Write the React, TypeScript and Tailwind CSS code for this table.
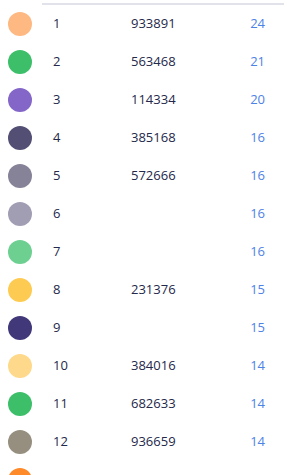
import React from 'react';

type Row = { rank: number | null; color: string; id: string; count: number | null };

const rows: Row[] = [
  { rank: 1, color: '#FEB882', id: '933891', count: 24 },
  { rank: 2, color: '#3DBF6A', id: '563468', count: 21 },
  { rank: 3, color: '#8466C9', id: '114334', count: 20 },
  { rank: 4, color: '#534F74', id: '385168', count: 16 },
  { rank: 5, color: '#868399', id: '572666', count: 16 },
  { rank: 6, color: '#A19EB3', id: '', count: 16 },
  { rank: 7, color: '#6DD091', id: '', count: 16 },
  { rank: 8, color: '#FECB52', id: '231376', count: 15 },
  { rank: 9, color: '#41387A', id: '', count: 15 },
  { rank: 10, color: '#FED98B', id: '384016', count: 14 },
  { rank: 11, color: '#3DBF6A', id: '682633', count: 14 },
  { rank: 12, color: '#968F7F', id: '936659', count: 14 },
  // last row is only peeking in at the bottom edge
  { rank: null, color: '#FE8A2A', id: '', count: null },
];

export default function App() {
  return (
    <div className="w-[287px] h-[475px] overflow-hidden bg-white" style={{ fontFamily: '"Open Sans", "Noto Sans", sans-serif' }}>
      <div className="ml-[42px] mr-[3px] mt-[3px] h-[2px] bg-[#e2e2ea]" />
      {rows.map((row, i) => (
        <div key={i} className="flex items-center h-[38px] text-[13px] text-[#24284a]">
          <div className="ml-[8px] w-[24px] h-[24px] rounded-full shrink-0" style={{ backgroundColor: row.color }} />
          <span className="ml-[21px] w-[78px]">{row.rank}</span>
          <span className="w-[100px]">{row.id}</span>
          <span className="w-[34px] text-right text-[#4d82e6]">{row.count}</span>
        </div>
      ))}
    </div>
  );
}
